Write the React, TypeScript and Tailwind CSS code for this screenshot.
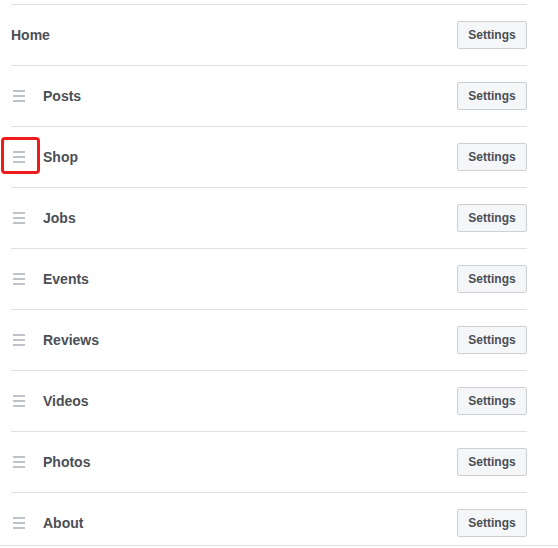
const tabs = ["Posts", "Shop", "Jobs", "Events", "Reviews", "Videos", "Photos", "About"];

function Handle({ marked }: { marked?: boolean }) {
  return (
    <div className="relative ml-[2px] flex w-[12px] flex-col gap-[3px]">
      <span className="block h-[2px] w-[12px] bg-[#bec3c9]" />
      <span className="block h-[2px] w-[12px] bg-[#bec3c9]" />
      <span className="block h-[2px] w-[12px] bg-[#bec3c9]" />
      {marked && (
        <div className="absolute left-[-12px] top-[-14px] h-[37px] w-[39px] rounded-[4px] border-[3px] border-[#ee1c1c]" />
      )}
    </div>
  );
}

function SettingsButton() {
  return (
    <button className="h-[28px] w-[70px] rounded-[2px] border border-[#ccd0d5] bg-[#f5f6f7] text-[12px] font-bold text-[#4b4f56]">
      Settings
    </button>
  );
}

export default function App() {
  return (
    <div
      className="h-[546px] w-[558px] overflow-hidden border-b border-[#dddfe2] bg-white"
      style={{ fontFamily: '"Liberation Sans", Arial, sans-serif' }}
    >
      <div className="ml-[11px] w-[516px] pt-[4px]">
        <div className="flex h-[61px] items-center justify-between border-t border-[#dddfe2]">
          <span className="text-[14px] font-bold text-[#4b4f56]">Home</span>
          <SettingsButton />
        </div>
        {tabs.map((t) => (
          <div key={t} className="flex h-[61px] items-center justify-between border-t border-[#dddfe2]">
            <div className="flex items-center">
              <Handle marked={t === "Shop"} />
              <span className="ml-[18px] text-[14px] font-bold text-[#4b4f56]">{t}</span>
            </div>
            <SettingsButton />
          </div>
        ))}
      </div>
    </div>
  );
}
